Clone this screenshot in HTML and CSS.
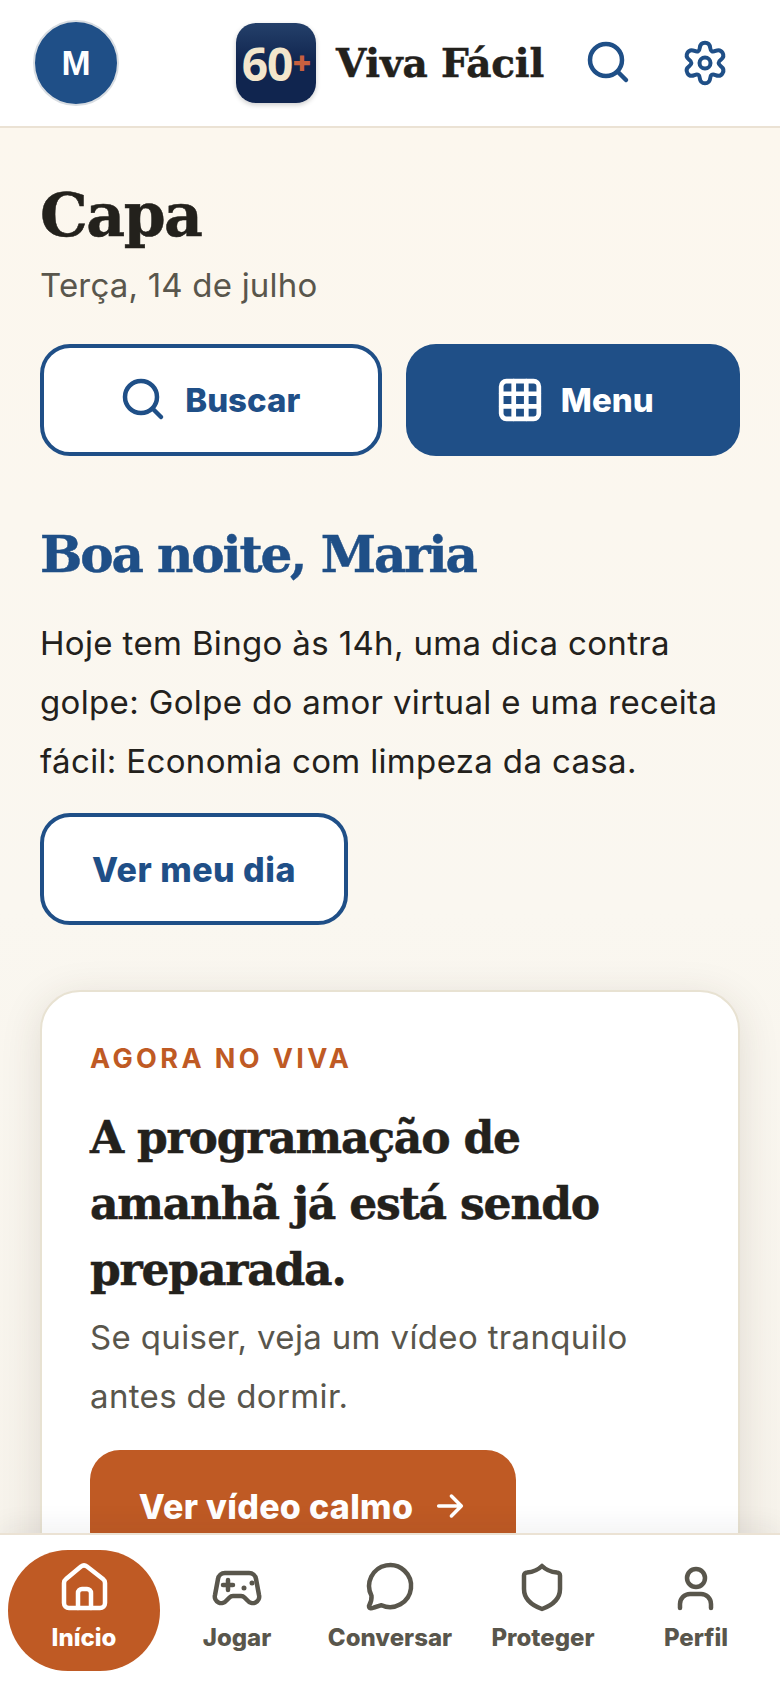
FILE: index.html
```html
<!DOCTYPE html>
<html lang="pt-BR">
<head>
    <meta charset="UTF-8">
    <meta name="viewport" content="width=device-width, initial-scale=1.0">
    <title>Viva Fácil</title>
    <link rel="stylesheet" href="styles.css">
</head>
<body>
    <header class="top-bar">
        <div class="avatar">M</div>
        <div class="brand">
            <div class="brand-logo"><span class="logo-num">60</span><span class="logo-plus">+</span></div>
            <span class="brand-name">Viva Fácil</span>
        </div>
        <div class="top-actions">
            <svg class="top-icon" viewBox="0 0 46 46"><circle cx="20" cy="20" r="16"/><path d="M32 32l8 8"/></svg>
            <svg class="top-icon gear" viewBox="0 0 46 46"><path d="M23 2.730Q27.680 2.730 28.220 7.890Q28.750 13.040 33.480 10.930Q38.210 8.810 40.550 12.870Q42.890 16.920 38.700 19.960Q34.500 23 38.700 26.040Q42.890 29.080 40.550 33.130Q38.210 37.190 33.480 35.070Q28.750 32.960 28.220 38.110Q27.680 43.270 23 43.270Q18.320 43.270 17.780 38.110Q17.250 32.960 12.520 35.070Q7.790 37.190 5.450 33.130Q3.110 29.080 7.300 26.040Q11.500 23 7.300 19.960Q3.110 16.920 5.450 12.870Q7.790 8.810 12.520 10.930Q17.250 13.040 17.780 7.890Q18.320 2.730 23 2.730Z"/><circle cx="23" cy="23" r="5.500"/></svg>
        </div>
    </header>

    <main class="content">
        <h1 class="page-title">Capa</h1>
        <p class="page-date">Terça, 14 de julho</p>

        <div class="quick-actions">
            <a class="btn btn-outline btn-search">
                <svg class="btn-icon" viewBox="0 0 46 46"><circle cx="20" cy="20" r="16"/><path d="M32 32l8 8"/></svg>
                Buscar
            </a>
            <a class="btn btn-solid btn-menu">
                <svg class="btn-icon" viewBox="0 0 44 44"><rect x="4" y="4" width="36" height="36" rx="5"/><path d="M16 4v36M28 4v36M4 16h36M4 28h36"/></svg>
                Menu
            </a>
        </div>

        <h2 class="greeting">Boa noite, Maria</h2>
        <p class="summary">Hoje tem Bingo às 14h, uma dica contra golpe: Golpe do amor virtual e uma receita fácil: Economia com limpeza da casa.</p>
        <a class="btn btn-outline btn-day">Ver meu dia</a>

        <section class="card">
            <div class="eyebrow">AGORA NO VIVA</div>
            <h3 class="card-title">A programação de amanhã já está sendo preparada.</h3>
            <p class="card-text">Se quiser, veja um vídeo tranquilo antes de dormir.</p>
            <a class="btn btn-orange">
                Ver vídeo calmo
                <svg class="btn-arrow" viewBox="0 0 24 24"><path d="M4 12h16M13 5l7 7-7 7"/></svg>
            </a>
        </section>
    </main>

    <nav class="bottom-nav">
        <a class="nav-item active">
            <svg class="nav-icon" viewBox="0 0 54 54"><path d="M24 6.500a5 5 0 0 1 6 0L46 19a5 5 0 0 1 2 4v20a5 5 0 0 1-5 5H12a5 5 0 0 1-5-5V23a5 5 0 0 1 2-4Z"/><path d="M21 48V33a4 4 0 0 1 4-4h5a4 4 0 0 1 4 4v15"/></svg>
            Início
        </a>
        <a class="nav-item">
            <svg class="nav-icon" viewBox="0 0 54 54"><path d="M15 13h24a7 7 0 0 1 7 6l3 16a6.500 6.500 0 0 1-11.500 5.500l-3-3a5 5 0 0 0-3.500-1.500H23a5 5 0 0 0-3.500 1.500l-3 3A6.500 6.500 0 0 1 5 35l3-16a7 7 0 0 1 7-6Z"/><path d="M18 20v10M13 25h10"/><path class="dot" d="M42 23h.01M34 28h.01"/></svg>
            Jogar
        </a>
        <a class="nav-item">
            <svg class="nav-icon" viewBox="0 0 54 54"><path d="M8.500 35.800A21 21 0 1 1 18.500 45.200L11 47.500Q6 49.500 6 46Q9 41 8.500 35.800Z"/></svg>
            Conversar
        </a>
        <a class="nav-item">
            <svg class="nav-icon" viewBox="0 0 54 54"><path d="M26 6c4 4 9 6 15 6.500a3 3 0 0 1 3 3V29c0 9-7 16-18 20C15 45 8 38 8 29V15.500a3 3 0 0 1 3-3C17 12 22 10 26 6Z"/></svg>
            Proteger
        </a>
        <a class="nav-item">
            <svg class="nav-icon" viewBox="0 0 54 54"><circle cx="27" cy="18" r="9"/><path d="M11 48V44a10 10 0 0 1 10-10h11a10 10 0 0 1 10 10v4"/></svg>
            Perfil
        </a>
    </nav>
</body>
</html>
```

FILE: styles.css
```css
* {
    box-sizing: border-box;
}
html, body {
    height: 100%;
}
body {
    margin: 0;
    height: 1688px;
    overflow: hidden;
    display: flex;
    flex-direction: column;
    position: relative;
    background: #faf6ee;
    font-family: Inter, "Open Sans", sans-serif;
    color: #23211c;
}
svg {
    fill: none;
    stroke: currentColor;
    stroke-linecap: round;
    stroke-linejoin: round;
}

/* barra de cima */
.top-bar {
    height: 128px;
    flex: none;
    display: flex;
    align-items: center;
    padding: 0 52px 1px 33px;
    background: #fff;
    border-bottom: 2px solid #ebe2d4;
}
.avatar {
    width: 86px;
    height: 86px;
    border-radius: 50%;
    background: #1f4f87;
    border: 2px solid #d8dde2;
    color: #fff;
    font-family: "Liberation Sans", sans-serif;
    font-weight: 700;
    font-size: 35px;
    display: flex;
    align-items: center;
    justify-content: center;
}
.brand {
    display: flex;
    align-items: center;
    gap: 20px;
    margin-left: 117px;
}
.brand-logo {
    width: 80px;
    height: 80px;
    border-radius: 20px;
    background: linear-gradient(#24406a, #10254f 50%);
    box-shadow: 0 2px 5px rgba(0, 0, 0, 0.2);
    display: flex;
    align-items: center;
    justify-content: center;
    font-family: "Open Sans", sans-serif;
    font-weight: 700;
    letter-spacing: -1px;
}
.logo-num {
    font-size: 46px;
    color: #f3e6cc;
}
.logo-plus {
    font-size: 32px;
    font-weight: 800;
    color: #c8603f;
}
.brand-name {
    font-family: "DejaVu Serif", serif;
    font-weight: 700;
    font-size: 39px;
    letter-spacing: -0.2px;
    white-space: nowrap;
    -webkit-text-stroke: 0.5px #23211c;
}
.top-actions {
    display: flex;
    align-items: center;
    gap: 50px;
    margin-left: auto;
    color: #1f4f87;
}
.top-icon {
    width: 46px;
    height: 46px;
    stroke-width: 4.5;
}
.gear {
    stroke-width: 4;
}

/* conteudo */
.content {
    flex: 1;
    min-height: 0;
    padding: 49px 40px 0;
    background: linear-gradient(#fcf7ee, #faf7f0 50%, #f6f2ea);
}
.page-title {
    margin: 0;
    font-family: "DejaVu Serif", serif;
    font-weight: 700;
    font-size: 60px;
    letter-spacing: -1.5px;
    line-height: 76px;
    -webkit-text-stroke: 0.5px #23211c;
}
.page-date {
    margin: 10px 0 0;
    font-size: 33px;
    letter-spacing: 0.2px;
    line-height: 44px;
    color: #59564c;
}
.quick-actions {
    display: flex;
    gap: 24px;
    margin-top: 37px;
}
.btn {
    display: inline-flex;
    align-items: center;
    justify-content: center;
    height: 112px;
    border-radius: 30px;
    font-weight: 800;
    font-size: 34px;
}
.btn-outline {
    background: #fff;
    border: 4px solid #1f4f87;
    color: #1f4f87;
}
.btn-solid {
    background: #1f4f87;
    color: #fff;
}
.btn-search,
.btn-menu {
    font-size: 33px;
    gap: 18px;
}
.btn-search {
    width: 342px;
}
.btn-menu {
    width: 335px;
    padding-left: 5px;
}
.btn-icon {
    width: 46px;
    height: 46px;
    stroke-width: 4.5;
}
.btn-arrow {
    width: 34px;
    height: 34px;
    stroke-width: 2.5;
}
.greeting {
    margin: 64px 0 0;
    font-family: "DejaVu Serif", serif;
    font-weight: 700;
    font-size: 50px;
    letter-spacing: -2.1px;
    line-height: 70px;
    color: #1f4f87;
    -webkit-text-stroke: 0.5px #1f4f87;
}
.summary {
    margin: 24px 0 0;
    font-size: 33px;
    letter-spacing: 0.35px;
    line-height: 59px;
    color: #23211c;
}
.btn-day {
    width: 308px;
    margin-top: 22px;
    letter-spacing: 0.5px;
}

/* card */
.card {
    height: 700px;
    margin-top: 65px;
    padding: 47px 48px;
    background: #fff;
    border: 2px solid #e8e2d2;
    border-radius: 40px;
    box-shadow: 0 8px 40px rgba(60, 50, 30, 0.13);
}
.eyebrow {
    font-weight: 700;
    font-size: 27px;
    line-height: 40px;
    letter-spacing: 3.4px;
    color: #bf5a24;
}
.card-title {
    margin: 26px 0 0;
    font-family: "DejaVu Serif", serif;
    font-weight: 700;
    font-size: 44px;
    letter-spacing: -1.2px;
    line-height: 66px;
    -webkit-text-stroke: 0.5px #23211c;
}
.card-text {
    margin: 5px 0 0;
    font-size: 33px;
    letter-spacing: 0.35px;
    line-height: 59px;
    color: #59564c;
}
.btn-orange {
    width: 426px;
    gap: 20px;
    margin-top: 24px;
    letter-spacing: 0.3px;
    background: #bf5a24;
    color: #fff;
}

/* barra de baixo */
.bottom-nav {
    position: absolute;
    left: 0;
    right: 0;
    bottom: 0;
    height: 155px;
    display: flex;
    padding: 15px 8px 17px;
    gap: 1px;
    background: #fff;
    border-top: 2px solid #ebe2d4;
    box-shadow: 0 -8px 24px rgba(40, 40, 50, 0.06);
}
.nav-item {
    flex: 1;
    display: flex;
    flex-direction: column;
    align-items: center;
    padding-top: 10px;
    gap: 8px;
    border-radius: 60px;
    font-weight: 800;
    font-size: 24px;
    line-height: 32px;
    color: #59564c;
}
.nav-item.active {
    background: #bf5a24;
    color: #fff;
}
.nav-icon {
    width: 54px;
    height: 54px;
    flex: none;
    stroke-width: 4.5;
}
.nav-icon .dot {
    stroke-width: 5;
}
```
